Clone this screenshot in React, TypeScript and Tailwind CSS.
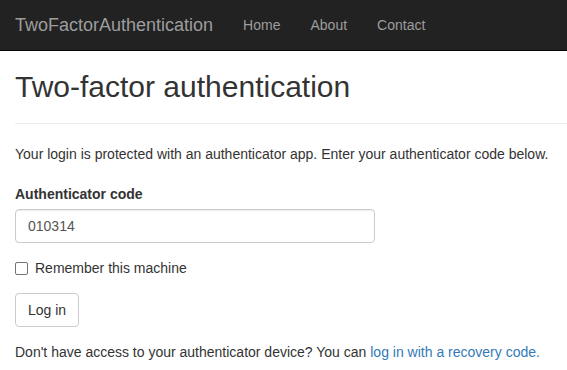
const navLinks = ['Home', 'About', 'Contact'];

export default function App() {
  return (
    <div className="min-h-[370px] bg-white text-[14px] leading-[20px] text-[#333] font-['Liberation_Sans',Arial,sans-serif]">
      <nav className="flex h-[51px] items-center border-b border-[#080808] bg-[#222]">
        <a href="#" className="px-[15px] text-[18px] leading-[20px] text-[#9d9d9d]">
          TwoFactorAuthentication
        </a>
        <ul className="flex">
          {navLinks.map((l) => (
            <li key={l}>
              <a href="#" className="block px-[15px] py-[15px] text-[#9d9d9d]">
                {l}
              </a>
            </li>
          ))}
        </ul>
      </nav>

      <div className="px-[15px]">
        <h2 className="mt-[19px] mb-[10px] text-[30px] leading-[33px] font-normal text-[#333]">
          Two-factor authentication
        </h2>
        <hr className="-mr-[15px] mt-[20px] mb-[20px] border-0 border-t border-[#eee]" />
        <p className="mb-[20px]">
          Your login is protected with an authenticator app. Enter your authenticator code below.
        </p>

        <form className="w-[360px]">
          <div className="mb-[15px]">
            <label className="mb-[5px] inline-block font-bold">Authenticator code</label>
            <input
              defaultValue="010314"
              className="block h-[34px] w-full rounded-[4px] border border-[#ccc] px-[12px] py-[6px] text-[14px] text-[#555] shadow-[inset_0_1px_1px_rgba(0,0,0,0.075)] outline-none"
            />
          </div>
          <div className="mb-[15px]">
            <label className="flex items-center gap-[7px]">
              <span className="mt-[1px] inline-block h-[13px] w-[13px] rounded-[2px] border border-[#767676] bg-white" />
              Remember this machine
            </label>
          </div>
          <div className="mb-[15px]">
            <button
              type="button"
              className="h-[34px] rounded-[4px] border border-[#ccc] bg-white px-[12px] text-[14px] text-[#333]"
            >
              Log in
            </button>
          </div>
        </form>

        <p>
          Don't have access to your authenticator device? You can{' '}
          <a href="#" className="text-[#337ab7]">
            log in with a recovery code.
          </a>
        </p>
      </div>
    </div>
  );
}
